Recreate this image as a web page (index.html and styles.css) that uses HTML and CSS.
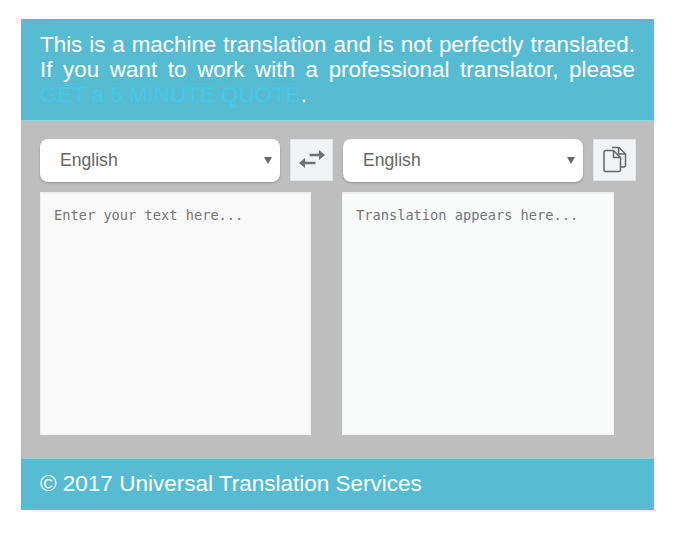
FILE: index.html
```html
<!DOCTYPE html>
<html lang="en">

<head>
  <meta charset="UTF-8">
  <meta name="viewport" content="width=device-width, initial-scale=1.0">
  <title>Universal Translation Services</title>
  <link rel="stylesheet" href="styles.css">
</head>

<body>

  <div class="container">
    <div class="notice">
      This is a machine translation and is not perfectly translated.
      If you want to work with a professional translator, please
      <a href="#">GET a 5 MINUTE QUOTE</a>.
    </div>

    <div class="translator">
      <div class="controls">
        <div class="select-box">
          <select>
            <option>English</option>
          </select>
        </div>
        <button class="icon-btn" title="Swap">
          <svg width="28" height="22" viewBox="0 0 28 22">
            <path d="M11.500 6H22" class="line" />
            <path d="M21 1L27 6L21 11Z" class="head" />
            <path d="M17.500 14H6" class="line" />
            <path d="M7 9L1 14L7 19Z" class="head" />
          </svg>
        </button>
        <div class="select-box">
          <select>
            <option>English</option>
          </select>
        </div>
        <button class="icon-btn" title="Copy">
          <svg width="24" height="28" viewBox="0 0 24 28">
            <path d="M9 1.500H16L22.500 8V19.500C22.500 20.500 22 21 21 21H18" class="outline" />
            <path d="M15.500 1.500V8H22.500" class="outline" />
            <path d="M3 4.500H10.500L17.500 11.500V24C17.500 25 17 25.500 16 25.500H3C2 25.500 1 25 1 24V6.500C1 5.500 2 4.500 3 4.500Z" class="outline fill" />
            <path d="M10.500 4.500V11.500H17.500" class="outline" />
          </svg>
        </button>
      </div>

      <div class="text-areas">
        <textarea class="source" placeholder="Enter your text here..."></textarea>
        <textarea class="target" placeholder="Translation appears here..."></textarea>
      </div>
    </div>

    <div class="footer">© 2017 Universal Translation Services</div>
  </div>

</body>

</html>
```

FILE: styles.css
```css
* {
  box-sizing: border-box;
  margin: 0;
  padding: 0;
  font-family: "Liberation Sans", Arial, sans-serif;
}

body {
  background-color: #fff;
  padding: 19px 22px 24px 21px;
}

.container {
  width: 633px;
  background: #bebebe;
}

.notice {
  height: 102px;
  padding: 13px 19px 0;
  background: #57bcd1;
  border-bottom: 1px solid #8fd6e4;
  color: #fff;
  font-size: 22.4px;
  line-height: 25px;
  text-align: justify;
}

.notice a {
  color: #44c9e6;
  text-decoration: none;
}

.translator {
  height: 337px;
  padding: 18px 18px 0 19px;
}

.controls {
  display: flex;
  gap: 10px;
  align-items: flex-start;
}

.select-box {
  position: relative;
  width: 240px;
}

.select-box::after {
  content: "";
  position: absolute;
  top: 18px;
  right: 8px;
  border-left: 4px solid transparent;
  border-right: 4px solid transparent;
  border-top: 7px solid #666;
}

select {
  display: block;
  width: 100%;
  height: 43px;
  padding: 0 0 2px 20px;
  background: #fff;
  color: #666;
  font-size: 17.6px;
  border: none;
  border-radius: 8px;
  box-shadow: 0px 1px 2px rgba(0, 0, 0, 0.25);
  appearance: none;
}

.icon-btn {
  display: flex;
  justify-content: center;
  align-items: center;
  width: 43px;
  height: 42px;
  background: #f2f3f5;
  border: 1px solid #e2e3e5;
}

.line {
  fill: none;
  stroke: #707070;
  stroke-width: 2.500;
}

.head {
  fill: #707070;
}

.outline {
  fill: none;
  stroke: #666;
  stroke-width: 1.500;
  stroke-linejoin: round;
}

.outline.fill {
  fill: #f2f3f5;
}

.text-areas {
  display: flex;
  gap: 31px;
  margin-top: 10px;
}

textarea {
  display: block;
  height: 243px;
  padding: 13px 13px;
  background: #f9f9f9;
  border: 1px solid #f0f0f0;
  border-top-width: 2px;
  font-family: "DejaVu Sans Mono", monospace;
  font-size: 13.680px;
  line-height: 16px;
  resize: none;
}

textarea::placeholder {
  color: #757575;
  opacity: 1;
}

.source {
  width: 271px;
}

.target {
  width: 272px;
  background: #f9fafa;
}

.footer {
  height: 52px;
  padding: 12px 0 0 19px;
  background: #57bcd1;
  border-top: 1px solid #8fd6e4;
  color: #fff;
  font-size: 22.500px;
  line-height: 26px;
}
```
